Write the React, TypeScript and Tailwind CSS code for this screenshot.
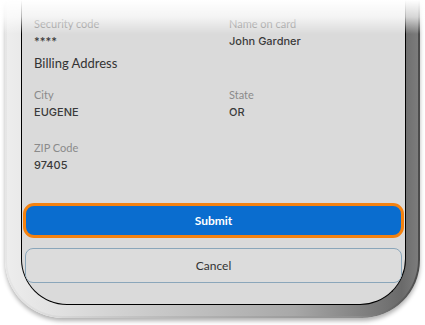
import React from 'react'

const font = { fontFamily: 'Lato, "Open Sans", Arial, sans-serif' }
const valueFont = { fontFamily: 'Inter, Lato, Arial, sans-serif' }

function Field({ label, value }: { label: string; value: string }) {
  return (
    <div className="flex flex-col">
      <span className="text-[11px] leading-[14px] text-[#8a8a8a]">{label}</span>
      <span className="mt-[3px] text-[11px] leading-[14px] font-medium text-[#3a3a3a]" style={valueFont}>
        {value}
      </span>
    </div>
  )
}

export default function App() {
  return (
    <div className="relative w-[425px] h-[325px] bg-white overflow-hidden" style={font}>
      {/* Phone frame */}
      <div className="ml-[5px] w-[415px] h-[318px] rounded-b-[58px] bg-[linear-gradient(to_right,#e6e6e6_0%,#b8b8b8_40%,#8e8e8e_85%,#4a4a4a_100%)] p-[2px] pt-0 shadow-[0_3px_4px_rgba(0,0,0,0.3)]">
        <div className="h-full rounded-b-[56px] bg-[linear-gradient(to_right,#ededed_0%,#cfcfcf_30%,#a8a8a8_70%,#6a6a6a_96%,#7c7c7c_100%)] pl-[14px] pr-[12px] pb-[11px]">
          {/* Screen */}
          <div className="h-full rounded-b-[46px] border-x-[1.5px] border-b-[1.5px] border-black bg-[#dadada] overflow-hidden flex flex-col">
            <div className="px-[12px] pt-[17px]">
              <div className="grid grid-cols-[195px_1fr]">
                <Field label="Security code" value="****" />
                <Field label="Name on card" value="John Gardner" />
              </div>

              <h2 className="mt-[6px] text-[13px] leading-[18px] text-[#333]">Billing Address</h2>

              <div className="mt-[16px] grid grid-cols-[195px_1fr]">
                <Field label="City" value="EUGENE" />
                <Field label="State" value="OR" />
              </div>

              <div className="mt-[22px]">
                <Field label="ZIP Code" value="97405" />
              </div>
            </div>

            <div className="mt-[31px] px-[1px] flex flex-col">
              <button className="h-[35px] w-full rounded-[11px] border-[3px] border-[#f5820f] bg-[#0a6dcf] text-[12px] font-bold text-white">
                Submit
              </button>
              <button className="mt-[10px] mx-[2px] h-[35px] rounded-[8px] border border-[#8aa6ba] bg-[#dcdcdc] text-[12px] text-[#333]">
                Cancel
              </button>
            </div>
          </div>
        </div>
      </div>

      {/* Top fade overlay */}
      <div className="absolute inset-x-0 top-0 h-[34px] bg-gradient-to-b from-white via-white/70 to-transparent pointer-events-none" />
    </div>
  )
}
